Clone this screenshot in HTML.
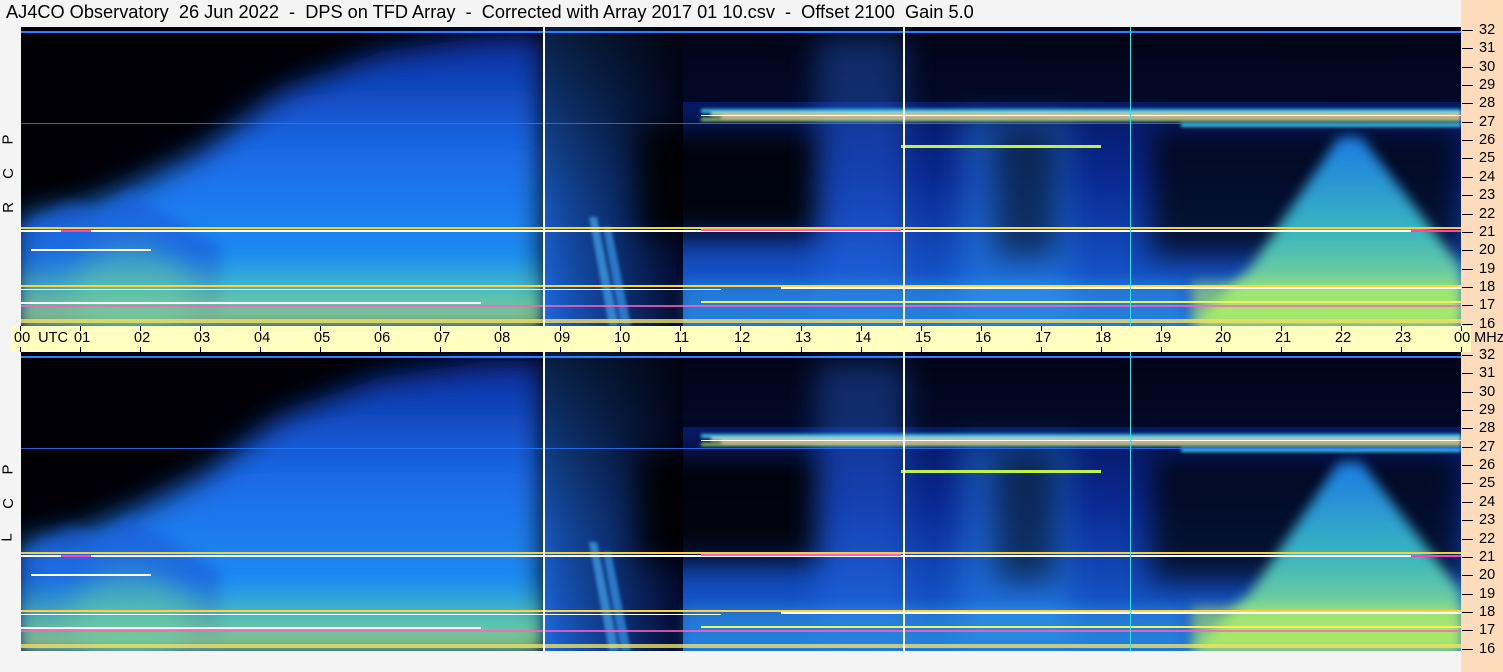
<!DOCTYPE html>
<html><head><meta charset="utf-8"><style>
body{margin:0;width:1503px;height:672px;background:#f4f4f4;position:relative;overflow:hidden;font-family:"Liberation Sans",sans-serif}
.t{position:absolute;left:6px;top:2px;font-size:18.2px;white-space:pre;color:#000}
.peach{position:absolute;left:1461px;top:0;width:42px;height:672px;background:#fddcbc}
.band{position:absolute;left:11px;top:326px;width:1460px;height:26px;background:#ffffc0}
.pan{position:absolute;left:21px;width:1440px;height:299px}
.lab{position:absolute;font-size:14.5px;color:#000;white-space:pre}
.tick{position:absolute;background:#000}
.rl{position:absolute;left:3px;font-size:15px;transform:rotate(-90deg)}
</style></head><body>
<div class="t">AJ4CO Observatory  26 Jun 2022  -  DPS on TFD Array  -  Corrected with Array 2017 01 10.csv  -  Offset 2100  Gain 5.0</div>
<div class="peach"></div>
<div class="band"></div>
<svg width="0" height="0" style="position:absolute"><defs>
<filter id="b15" x="-50%" y="-50%" width="200%" height="200%"><feGaussianBlur stdDeviation="14"/></filter>
<filter id="b6" x="-50%" y="-50%" width="200%" height="200%"><feGaussianBlur stdDeviation="6"/></filter>
<filter id="b2" x="-50%" y="-50%" width="200%" height="200%"><feGaussianBlur stdDeviation="1.5"/></filter>
<linearGradient id="gl" x1="0" y1="0" x2="0" y2="1"><stop offset="0" stop-color="#0a2a9a"/><stop offset=".4" stop-color="#1a6ae8"/><stop offset="1" stop-color="#20a0f8"/></linearGradient>
<linearGradient id="gr" x1="0" y1="0" x2="0" y2="1"><stop offset="0" stop-color="#030a38"/><stop offset=".5" stop-color="#0a2890"/><stop offset="1" stop-color="#1a68e0"/></linearGradient>
<linearGradient id="gm" x1="0" y1="0" x2="1" y2="0"><stop offset="0" stop-color="#1e70f0"/><stop offset="1" stop-color="#020830"/></linearGradient>
<linearGradient id="gmv" x1="0" y1="0" x2="0" y2="1"><stop offset="0" stop-color="#000" stop-opacity=".7"/><stop offset=".6" stop-color="#000" stop-opacity=".2"/><stop offset="1" stop-color="#000" stop-opacity="0"/></linearGradient>
<linearGradient id="gy" x1="0" y1="0" x2="0" y2="1"><stop offset="0" stop-color="#40d0c0" stop-opacity="0"/><stop offset=".6" stop-color="#80e080"/><stop offset="1" stop-color="#e0f060"/></linearGradient>
<linearGradient id="tri" x1="0" y1="0" x2="0" y2="1"><stop offset="0" stop-color="#1e88f8"/><stop offset=".5" stop-color="#40c8d0"/><stop offset="1" stop-color="#b8f060"/></linearGradient>
<g id="spec">
<rect width="1440" height="299" fill="#000006"/>
<polygon points="0,299 0,190 60,180 110,160 180,125 260,65 360,25 460,10 522,8 522,299" fill="url(#gl)" filter="url(#b15)"/>
<polygon points="0,299 0,200 50,175 80,185 110,165 150,190 200,220 200,299" fill="#1a5ad8" opacity=".6" filter="url(#b6)"/>
<rect x="0" y="225" width="520" height="74" fill="url(#gy)" opacity=".6" filter="url(#b6)"/>
<ellipse cx="110" cy="265" rx="60" ry="45" fill="#70e0a0" opacity=".4" filter="url(#b15)"/>
<rect x="524" y="0" width="140" height="299" fill="url(#gm)" opacity=".9"/>
<rect x="524" y="0" width="140" height="299" fill="url(#gmv)"/>
<g filter="url(#b2)" opacity=".6"><polygon points="568,190 576,190 598,299 588,299" fill="#50b8ff"/><polygon points="582,200 590,200 610,299 600,299" fill="#40a8ff"/></g>
<rect x="662" y="0" width="778" height="299" fill="url(#gr)"/>
<rect x="662" y="0" width="778" height="75" fill="#000" opacity=".6"/>
<rect x="620" y="100" width="180" height="110" fill="#000" opacity=".9" filter="url(#b15)"/>
<rect x="795" y="10" width="90" height="289" fill="#2a70f0" opacity=".35" filter="url(#b15)"/>
<rect x="940" y="90" width="110" height="200" fill="#30a0ff" opacity=".35" filter="url(#b15)"/>
<rect x="975" y="100" width="60" height="130" fill="#000" opacity=".5" filter="url(#b15)"/>
<rect x="1130" y="100" width="310" height="130" fill="#000" opacity=".7" filter="url(#b15)"/>
<polygon points="1318,110 1340,110 1440,240 1440,299 1170,299 1230,240" fill="url(#tri)" opacity=".9" filter="url(#b6)"/>
<rect x="1170" y="255" width="270" height="44" fill="#b0f060" opacity=".6" filter="url(#b6)"/>
<rect x="662" y="255" width="500" height="44" fill="#40c0e0" opacity=".3" filter="url(#b6)"/>
<g filter="url(#b2)" opacity=".85">
<rect x="680" y="82" width="760" height="4" fill="#40e0ff"/>
<rect x="690" y="86" width="750" height="3" fill="#f0f060"/>
<rect x="700" y="89" width="740" height="2" fill="#ff60c0"/>
<rect x="680" y="91" width="760" height="3" fill="#c0ff60"/>
<rect x="1160" y="96" width="280" height="4" fill="#40e0ff"/>
</g>
<rect x="680" y="88" width="760" height="1" fill="#fff"/>
<rect x="0" y="4" width="1440" height="2" fill="#2a80ff"/>
<rect x="0" y="96" width="1440" height="1" fill="#2a7aff" opacity=".8"/>
<rect x="880" y="118" width="200" height="3" fill="#c0f040"/>
<rect x="0" y="200" width="1440" height="2" fill="#f0d040"/>
<rect x="0" y="203" width="1440" height="2" fill="#fff"/>
<rect x="40" y="203" width="30" height="2" fill="#ff40c0"/><rect x="680" y="202" width="200" height="2" fill="#ff60c0"/><rect x="1390" y="203" width="50" height="2" fill="#ff40c0"/>
<rect x="10" y="222" width="120" height="2" fill="#fff"/>
<rect x="0" y="258" width="1440" height="2" fill="#ffd040"/>
<rect x="0" y="262" width="700" height="1" fill="#fff"/>
<rect x="760" y="260" width="680" height="2" fill="#fff"/>
<rect x="0" y="275" width="460" height="2" fill="#fff"/>
<rect x="680" y="274" width="760" height="2" fill="#f0f060"/>
<rect x="0" y="278" width="1440" height="2" fill="#ff60c0" opacity=".8"/>
<rect x="0" y="292" width="1440" height="4" fill="#f0e060" opacity=".8"/>
<rect x="522" y="0" width="2" height="299" fill="#fff"/>
<rect x="882" y="0" width="2" height="299" fill="#fff"/>
<rect x="1109" y="0" width="1" height="299" fill="#40e0e0"/>
</g></defs></svg>
<svg class="pan" style="top:27px" viewBox="0 0 1440 299"><use href="#spec"/></svg>
<svg class="pan" style="top:352px" viewBox="0 0 1440 299"><use href="#spec"/></svg>
<span class="rl" style="top:199px">R</span><span class="rl" style="top:165px">C</span><span class="rl" style="top:131px">P</span>
<span class="rl" style="top:529px">L</span><span class="rl" style="top:495px">C</span><span class="rl" style="top:461px">P</span>
<div id="ax"></div>
<script>
var h='';
for(var i=0;i<=24;i++){var x=Math.round(20+i*60.04);var s=(i%24<10?'0':'')+(i%24);
h+='<div class="tick" style="left:'+x+'px;top:326px;width:1px;height:5px"></div><div class="tick" style="left:'+x+'px;top:347px;width:1px;height:5px"></div>';
var t=s; if(i==0)t='00  UTC'; if(i==24)t='00 MHz';
h+='<div class="lab" style="left:'+(i==24?x-7:x-6)+'px;top:330px">'+t+'</div>';}
[27,352].forEach(function(top){for(var f=32;f>=16;f--){var y=Math.round(top+3+(32-f)*18.35);
h+='<div class="tick" style="left:1462px;top:'+y+'px;width:11px;height:1px"></div><div class="lab" style="left:1479px;top:'+(y-8)+'px">'+f+'</div>';}});
document.getElementById('ax').innerHTML=h;
</script>
</body></html>
